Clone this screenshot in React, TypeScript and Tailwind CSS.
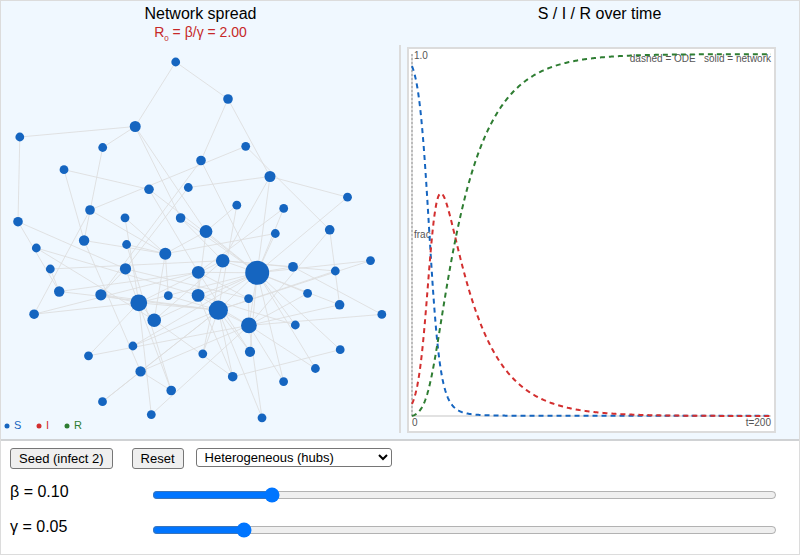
import { useState } from "react";

type Mode = "heterogeneous" | "homogeneous";

// [x, y, radius]
const NODES: [number, number, number][] = [
  [175.7, 62, 4.4], [228, 99, 4.8], [135.2, 126.5, 5.5], [19.8, 137, 4.4], [102.7, 147.5, 4.4],
  [245.7, 146.3, 4.4], [201, 160.5, 4.8], [64, 169.7, 4.4], [270, 176.5, 5.5], [149, 189.3, 4.8],
  [188.3, 187.5, 4.4], [347.5, 197.2, 4.4], [236.8, 205.2, 4.4], [283.7, 208.4, 4.4], [90, 210, 4.8],
  [125, 217.8, 4.4], [180.6, 218, 4.8], [18, 221.7, 4.8], [206, 231.5, 6.4], [329.7, 229.8, 4.8],
  [275.3, 233.5, 4.4], [84.1, 240.5, 5.2], [126.6, 244.5, 4.4], [36.3, 248, 4.4], [165.3, 253.7, 6],
  [222.7, 260.7, 6.8], [257.2, 272.8, 12], [370.5, 260.6, 4.4], [293, 266.8, 4.9], [335.3, 271, 4.4],
  [125.5, 268.8, 5.6], [50.3, 269, 4.4], [198.3, 272.3, 6.4], [59.2, 291.5, 5.2], [100.9, 294.8, 5.6],
  [138.8, 302.8, 8.4], [168.3, 295.7, 4.4], [198.1, 295.4, 6.4], [248.6, 298.6, 4.4], [307.6, 293.3, 4.4],
  [339.6, 304.8, 4.8], [218.3, 310.2, 9.6], [154.2, 320.2, 6.8], [248.9, 325.4, 7.9], [295.3, 325, 4.4],
  [34.1, 314.2, 4.8], [381.8, 314.4, 4.4], [132.9, 346, 4.4], [88.5, 355.8, 4.4], [202.8, 353.8, 4.4],
  [250, 351.8, 5.1], [340.2, 349.7, 4.4], [315.4, 368.5, 4.4], [232.7, 376.7, 4.8], [140.6, 371.4, 5.2],
  [283.6, 381.6, 4.4], [171.2, 390.5, 4.8], [102.5, 401.7, 4.4], [151.3, 414.6, 4.4], [262, 417.8, 4.4],
];

const EDGES: [number, number][] = [
  [0, 1], [0, 2], [1, 6], [1, 8], [2, 3], [2, 4], [2, 16], [2, 18], [3, 17], [4, 21],
  [5, 14], [5, 19], [6, 26], [6, 34], [7, 9], [7, 21], [8, 10], [8, 11], [8, 25], [8, 26],
  [9, 26], [9, 32], [10, 30], [11, 26], [12, 18], [12, 41], [13, 26], [13, 32], [14, 45], [14, 24],
  [15, 24], [15, 35], [16, 26], [16, 25], [17, 30], [17, 33], [18, 26], [18, 24], [18, 37], [19, 40],
  [19, 43], [20, 24], [20, 26], [21, 24], [21, 54], [22, 24], [22, 56], [23, 37], [23, 42], [24, 36],
  [24, 42], [25, 31], [25, 26], [25, 28], [25, 29], [25, 42], [26, 27], [26, 28], [26, 39], [26, 40],
  [26, 44], [26, 51], [26, 52], [26, 55], [26, 43], [26, 41], [26, 32], [26, 37], [26, 35], [26, 42],
  [27, 41], [28, 46], [29, 41], [30, 56], [30, 34], [30, 38], [31, 33], [32, 33], [32, 37], [32, 45],
  [32, 50], [33, 41], [34, 41], [34, 35], [35, 25], [35, 41], [35, 42], [35, 45], [35, 48], [35, 58],
  [36, 41], [37, 43], [37, 44], [37, 53], [38, 43], [38, 32], [39, 43], [40, 43], [41, 43], [41, 47],
  [41, 49], [41, 50], [41, 53], [41, 54], [41, 57], [41, 59], [42, 53], [43, 46], [43, 48], [43, 52],
  [43, 54], [43, 55], [43, 58], [43, 59], [25, 49], [26, 47], [26, 50], [51, 53], [54, 56], [54, 57],
];

const MEAN_DEGREE = 3.9;
const T_MAX = 200;
const PLOT = { left: 3, right: 362, top: 5, bottom: 367 };

function solve(beta: number, gamma: number) {
  const dt = 0.1;
  let s = 58 / 60;
  let i = 2 / 60;
  let r = 0;
  const out: [number, number, number, number][] = [];
  const steps = Math.round(T_MAX / dt);
  for (let n = 0; n <= steps; n++) {
    if (n % 5 === 0) out.push([n * dt, s, i, r]);
    const infected = beta * MEAN_DEGREE * s * i * dt;
    const recovered = gamma * i * dt;
    s -= infected;
    i += infected - recovered;
    r += recovered;
  }
  return out;
}

function toPoints(rows: [number, number, number, number][], col: 1 | 2 | 3) {
  return rows
    .map((row) => {
      const x = PLOT.left + (row[0] / T_MAX) * (PLOT.right - PLOT.left);
      const y = PLOT.bottom - row[col] * (PLOT.bottom - PLOT.top);
      return `${x.toFixed(2)},${y.toFixed(2)}`;
    })
    .join(" ");
}

function NetworkGraph() {
  return (
    <svg viewBox="1 45 398 388" className="block w-full text-[11px]" role="img" aria-label="Contact network">
      <g stroke="#dddddd" strokeOpacity="0.85" strokeWidth="1">
        {EDGES.map(([a, b]) => (
          <line key={`${a}-${b}`} x1={NODES[a][0]} y1={NODES[a][1]} x2={NODES[b][0]} y2={NODES[b][1]} />
        ))}
      </g>
      <g fill="#1565c0">
        {NODES.map(([x, y, r], n) => (
          <circle key={n} cx={x} cy={y} r={r} />
        ))}
      </g>
      <g fill="#1565c0">
        <circle cx="7" cy="426" r="2.5" />
        <text x="14" y="429">S</text>
      </g>
      <g fill="#d32f2f">
        <circle cx="39" cy="426" r="2.5" />
        <text x="46" y="429">I</text>
      </g>
      <g fill="#2e7d32">
        <circle cx="67" cy="426" r="2.5" />
        <text x="74" y="429">R</text>
      </g>
    </svg>
  );
}

function TimeChart({ beta, gamma }: { beta: number; gamma: number }) {
  const rows = solve(beta, gamma);
  return (
    <svg viewBox="0 0 365 382" className="block w-full text-[10px]" role="img" aria-label="S, I and R over time">
      <path d="M3 5V367H362" fill="none" stroke="#e2e2e2" strokeWidth="2" />
      <path d="M3 5V367" stroke="#bbbbbb" strokeWidth="2" strokeDasharray="2 2" />
      <g fill="#555555">
        <text x="5" y="10">1.0</text>
        <text x="5" y="189">frac</text>
        <text x="3" y="377">0</text>
        <text x="362" y="377" textAnchor="end">t=200</text>
        <text x="362" y="13" textAnchor="end" className="whitespace-pre">{"dashed = ODE   solid = network"}</text>
      </g>
      <g fill="none" strokeWidth="2" strokeDasharray="5 4">
        <polyline points={toPoints(rows, 1)} stroke="#1565c0" />
        <polyline points={toPoints(rows, 2)} stroke="#d32f2f" />
        <polyline points={toPoints(rows, 3)} stroke="#2e7d32" />
      </g>
    </svg>
  );
}

type SliderProps = {
  id: string;
  symbol: string;
  value: number;
  max: number;
  onChange: (value: number) => void;
};

function SliderRow({ id, symbol, value, max, onChange }: SliderProps) {
  return (
    <div className="flex h-[35px] items-start">
      <label htmlFor={id} className="w-[142px] shrink-0 text-base leading-5">
        {symbol} = {value.toFixed(2)}
      </label>
      <input
        id={id}
        type="range"
        min={0.01}
        max={max}
        step={0.01}
        value={value}
        onChange={(e) => onChange(Number(e.target.value))}
        className="mt-[5px] h-4 min-w-0 flex-1 accent-[#0075ff]"
      />
    </div>
  );
}

const BUTTON = "h-[21px] rounded-[3px] border border-[#767676] bg-[#efefef] px-2 text-[13px] leading-none";

export default function App() {
  const [beta, setBeta] = useState(0.1);
  const [gamma, setGamma] = useState(0.05);
  const [mode, setMode] = useState<Mode>("heterogeneous");

  return (
    <main className="border border-[#dcdcdc] bg-white font-['Liberation_Sans',Arial,sans-serif] text-black">
      <div className="grid grid-cols-2 border-b-2 border-[#d0d2d4] bg-[#f0f8ff] pb-1.5">
        <section>
          <header className="h-11 pt-[3px] text-center">
            <h2 className="text-base leading-5">Network spread</h2>
            <p className="text-sm leading-4 text-[#c62828]">
              R<sub className="-bottom-1 text-[8px]">0</sub> = β/γ = {(beta / gamma).toFixed(2)}
            </p>
          </header>
          <div className="-mr-px border-r-2 border-[#dcdcdc]">
            <NetworkGraph />
          </div>
        </section>
        <section>
          <header className="h-[46px] pt-[3px] text-center">
            <h2 className="text-base leading-5">S / I / R over time</h2>
          </header>
          <div className="mr-[23px] ml-[7px] border-2 border-[#dcdcdc] bg-white">
            <TimeChart beta={beta} gamma={gamma} />
          </div>
        </section>
      </div>
      <div className="pt-[7px] pr-[22px] pl-[9px]">
        <div className="flex items-start">
          <button type="button" className={BUTTON}>Seed (infect 2)</button>
          <button type="button" className={`ml-[19px] ${BUTTON}`}>Reset</button>
          <select
            aria-label="Network type"
            value={mode}
            onChange={(e) => setMode(e.target.value as Mode)}
            className="ml-3 h-[19px] w-[196px] rounded-[3px] border border-[#767676] bg-white pl-1 text-[13px] leading-none"
          >
            <option value="heterogeneous">Heterogeneous (hubs)</option>
            <option value="homogeneous">Homogeneous</option>
          </select>
        </div>
        <div className="pt-[13px] pb-0.5">
          <SliderRow id="beta" symbol="β" value={beta} max={0.5} onChange={setBeta} />
          <SliderRow id="gamma" symbol="γ" value={gamma} max={0.3} onChange={setGamma} />
        </div>
      </div>
    </main>
  );
}
